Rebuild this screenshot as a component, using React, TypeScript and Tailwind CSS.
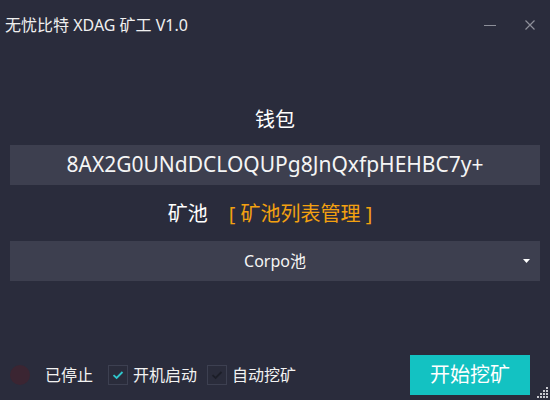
import { useState } from "react";

const cjk = { fontFamily: '"Noto Sans", "Noto Sans CJK SC", sans-serif' };

function Check({ checked, label }: { checked: boolean; label: string }) {
  return (
    <div className="flex items-center gap-[5px]">
      <div className="flex h-[20px] w-[20px] items-center justify-center border border-[#3d4051] bg-[#2a2c3b]">
        <svg width="12" height="10" viewBox="0 0 12 10">
          <path
            d="M1.5 5.2 L4.6 8 L10.5 2"
            fill="none"
            stroke={checked ? "#2fc6cc" : "#1c1e28"}
            strokeWidth="1.8"
          />
        </svg>
      </div>
      <span className="text-[16px] leading-[20px] text-[#f2f2f2]">{label}</span>
    </div>
  );
}

export default function App() {
  const [autoStart] = useState(true);
  const [autoMine] = useState(false);

  return (
    <div className="relative flex h-[400px] w-[550px] flex-col bg-[#2a2c3c] text-white" style={cjk}>
      <div className="flex h-[50px] items-center justify-between pl-[5px] pr-[15px]">
        <span className="text-[16px] text-[#f0f0f0]">无忧比特 XDAG 矿工 V1.0</span>
        <div className="flex items-center gap-[29px]">
          <div className="h-[1px] w-[12px] bg-[#8d8f99]" />
          <svg width="10" height="10" viewBox="0 0 10 10">
            <path d="M0.5 0.5 L9.5 9.5 M9.5 0.5 L0.5 9.5" stroke="#8d8f99" strokeWidth="1.2" />
          </svg>
        </div>
      </div>

      <div className="mt-[56px] text-center text-[20px] leading-[28px]">钱包</div>
      <div className="mx-[10px] mt-[11px] flex h-[40px] items-center justify-center bg-[#3d3f4f] text-[21px] text-[#f5f5f5]">
        8AX2G0UNdDCLOQUPg8JnQxfpHEHBC7y+
      </div>

      <div className="mt-[15px] flex items-center justify-center gap-[21px] pr-[10px] text-[20px] leading-[28px]">
        <span>矿池</span>
        <span className="text-[#f3a110]">[ 矿池列表管理 ]</span>
      </div>
      <div className="relative mx-[10px] mt-[13px] flex h-[40px] items-center justify-center bg-[#3d3f4f] text-[16px] text-[#f5f5f5]">
        Corpo池
        <svg className="absolute right-[10px] top-[18px]" width="7" height="4" viewBox="0 0 7 4">
          <path d="M0 0 H7 L3.5 4 Z" fill="#ffffff" />
        </svg>
      </div>

      <div className="mt-auto flex items-center pb-[5px] pl-[10px] pr-[20px]">
        <div className="h-[20px] w-[20px] rounded-full bg-[#3b2532]" />
        <span className="ml-[15px] text-[16px] leading-[20px] text-[#f2f2f2]">已停止</span>
        <div className="ml-[15px] flex items-center gap-[10px]">
          <Check checked={autoStart} label="开机启动" />
          <Check checked={autoMine} label="自动挖矿" />
        </div>
        <button className="ml-auto flex h-[40px] w-[120px] items-center justify-center bg-[#13c2c2] text-[20px] text-white">
          开始挖矿
        </button>
      </div>

      <svg className="absolute bottom-[2px] right-[2px]" width="11" height="11" viewBox="0 0 11 11">
        <g fill="#c8c9d0">
          <rect x="9" y="0" width="2" height="2" />
          <rect x="6" y="3" width="2" height="2" />
          <rect x="9" y="3" width="2" height="2" />
          <rect x="3" y="6" width="2" height="2" />
          <rect x="6" y="6" width="2" height="2" />
          <rect x="9" y="6" width="2" height="2" />
          <rect x="0" y="9" width="2" height="2" />
          <rect x="3" y="9" width="2" height="2" />
          <rect x="6" y="9" width="2" height="2" />
          <rect x="9" y="9" width="2" height="2" />
        </g>
      </svg>
    </div>
  );
}
